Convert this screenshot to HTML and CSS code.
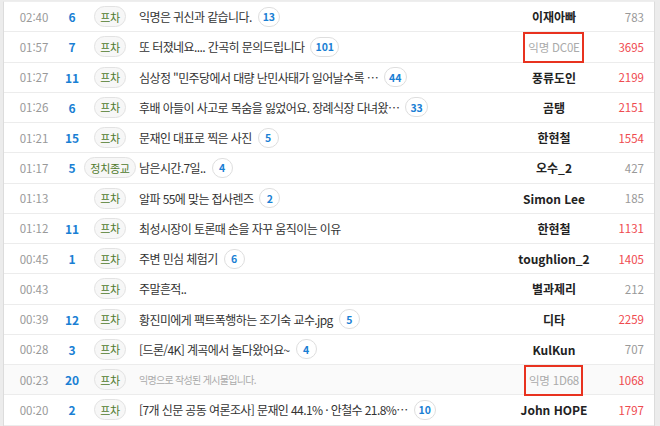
FILE: index.html
```html
<!DOCTYPE html>
<html lang="ko">
<head>
<meta charset="utf-8">
<title>게시판</title>
<link rel="stylesheet" href="styles.css">
</head>
<body>
<div class="board">
  <div class="row">
    <span class="time">02:40</span><span class="num">6</span><span class="cat"><span class="tag">프차</span></span>
    <span class="subject"><span class="title">익명은 귀신과 같습니다.</span><span class="cmt">13</span></span>
    <span class="author">이재아빠</span><span class="views">783</span>
  </div>
  <div class="row">
    <span class="time">01:57</span><span class="num">7</span><span class="cat"><span class="tag">프차</span></span>
    <span class="subject"><span class="mark"><span class="title">또 터졌네요.... 간곡히 문의드립니다</span><span class="cmt">101</span></span></span>
    <span class="author"><span class="anon boxed">익명 DC0E</span></span><span class="views hot">3695</span>
  </div>
  <div class="row">
    <span class="time">01:27</span><span class="num">11</span><span class="cat"><span class="tag">프차</span></span>
    <span class="subject"><span class="title">심상정 "민주당에서 대량 난민사태가 일어날수록 …</span><span class="cmt">44</span></span>
    <span class="author">풍류도인</span><span class="views hot">2199</span>
  </div>
  <div class="row">
    <span class="time">01:26</span><span class="num">6</span><span class="cat"><span class="tag">프차</span></span>
    <span class="subject"><span class="title">후배 아들이 사고로 목숨을 잃었어요. 장례식장 다녀왔…</span><span class="cmt">33</span></span>
    <span class="author">곰탱</span><span class="views hot">2151</span>
  </div>
  <div class="row">
    <span class="time">01:21</span><span class="num">15</span><span class="cat"><span class="tag">프차</span></span>
    <span class="subject"><span class="title">문재인 대표로 찍은 사진</span><span class="cmt">5</span></span>
    <span class="author">한현철</span><span class="views hot">1554</span>
  </div>
  <div class="row">
    <span class="time">01:17</span><span class="num">5</span><span class="cat"><span class="tag">정치종교</span></span>
    <span class="subject"><span class="title">남은시간.7일..</span><span class="cmt">4</span></span>
    <span class="author">오수_2</span><span class="views">427</span>
  </div>
  <div class="row">
    <span class="time">01:13</span><span class="num"></span><span class="cat"><span class="tag">프차</span></span>
    <span class="subject"><span class="title">알파 55에 맞는 접사렌즈</span><span class="cmt">2</span></span>
    <span class="author">Simon Lee</span><span class="views">185</span>
  </div>
  <div class="row">
    <span class="time">01:12</span><span class="num">11</span><span class="cat"><span class="tag">프차</span></span>
    <span class="subject"><span class="title">최성시장이 토론때 손을 자꾸 움직이는 이유</span></span>
    <span class="author">한현철</span><span class="views hot">1131</span>
  </div>
  <div class="row">
    <span class="time">00:45</span><span class="num">1</span><span class="cat"><span class="tag">프차</span></span>
    <span class="subject"><span class="title">주변 민심 체험기</span><span class="cmt">6</span></span>
    <span class="author">toughlion_2</span><span class="views hot">1405</span>
  </div>
  <div class="row">
    <span class="time">00:43</span><span class="num"></span><span class="cat"><span class="tag">프차</span></span>
    <span class="subject"><span class="title">주말흔적..</span></span>
    <span class="author">별과제리</span><span class="views">212</span>
  </div>
  <div class="row">
    <span class="time">00:39</span><span class="num">12</span><span class="cat"><span class="tag">프차</span></span>
    <span class="subject"><span class="title">황진미에게 팩트폭행하는 조기숙 교수.jpg</span><span class="cmt">5</span></span>
    <span class="author">디타</span><span class="views hot">2259</span>
  </div>
  <div class="row">
    <span class="time">00:28</span><span class="num">3</span><span class="cat"><span class="tag">프차</span></span>
    <span class="subject"><span class="title">[드론/4K] 계곡에서 놀다왔어요~</span><span class="cmt">4</span></span>
    <span class="author">KulKun</span><span class="views">707</span>
  </div>
  <div class="row dim">
    <span class="time">00:23</span><span class="num">20</span><span class="cat"><span class="tag">프차</span></span>
    <span class="subject"><span class="mark"><span class="title muted">익명으로 작성된 게시물입니다.</span></span></span>
    <span class="author"><span class="anon boxed">익명 1D68</span></span><span class="views hot">1068</span>
  </div>
  <div class="row">
    <span class="time">00:20</span><span class="num">2</span><span class="cat"><span class="tag">프차</span></span>
    <span class="subject"><span class="title">[7개 신문 공동 여론조사] 문재인 44.1% · 안철수 21.8%…</span><span class="cmt">10</span></span>
    <span class="author">John HOPE</span><span class="views hot">1797</span>
  </div>
</div>
</body>
</html>
```

FILE: styles.css
```css
* { box-sizing: border-box; }
html, body {
  margin: 0;
  padding: 0;
  background: #ececec;
  font-family: "Noto Sans CJK KR", "Noto Sans", sans-serif;
  color: #333;
}
.board {
  margin: 1px 5px 0 3px;
  background: #fff;
  border-left: 1px solid #dcdcdc;
  border-right: 1px solid #dcdcdc;
  border-top: 1px solid #eee;
}
.row {
  display: grid;
  grid-template-columns: 58px 20px 56px 1fr 120px 40px;
  align-items: center;
  height: 30.25px;
  border-bottom: 1px solid #ececec;
  font-size: 12px;
}
.row.dim { background: #fafafa; }
.time {
  text-align: center;
  color: #999;
  font-size: 11.5px;
  padding-left: 2px;
}
.num {
  text-align: center;
  color: #1a7fd4;
  font-weight: bold;
  font-size: 12px;
}
.cat { display: flex; justify-content: center; }
.tag {
  display: inline-flex;
  align-items: center;
  height: 21px;
  padding: 0 5px;
  border: 1px solid #e2e2e2;
  border-radius: 11px;
  background: #f7f7f7;
  color: #4f7a2c;
  font-size: 11px;
  letter-spacing: -0.3px;
}
.subject {
  display: flex;
  align-items: center;
  padding-left: 1px;
  white-space: nowrap;
  overflow: hidden;
}
.mark {
  position: relative;
  display: inline-flex;
  align-items: center;
}
.mark::after {
  content: "";
  position: absolute;
  left: -3px;
  right: -4px;
  bottom: -6px;
  height: 2.5px;
  background: #e8321f;
  border-radius: 1px;
}
.title {
  letter-spacing: -0.6px;
  color: #333;
}
.title.muted {
  color: #aaa;
  font-size: 10px;
  letter-spacing: -0.7px;
}
.cmt {
  display: inline-flex;
  align-items: center;
  justify-content: center;
  min-width: 21px;
  height: 20px;
  margin-left: 6px;
  padding: 0 4px;
  border: 1px solid #dedede;
  border-radius: 10px;
  color: #1a7fd4;
  font-weight: bold;
  font-size: 10.5px;
}
.author {
  text-align: center;
  font-weight: bold;
  font-size: 12px;
  white-space: nowrap;
  color: #222;
}
.anon {
  font-weight: normal;
  color: #aaa;
  font-size: 11.5px;
  letter-spacing: -0.2px;
}
.boxed {
  position: relative;
  display: inline-block;
}
.boxed::after {
  content: "";
  position: absolute;
  left: -5px;
  right: -4px;
  top: -7px;
  bottom: -8px;
  border: 2px solid #e8321f;
}
.views {
  padding-right: 10px;
  text-align: right;
  color: #999;
  font-size: 11.5px;
}
.views.hot { color: #ef4a4f; }
```
